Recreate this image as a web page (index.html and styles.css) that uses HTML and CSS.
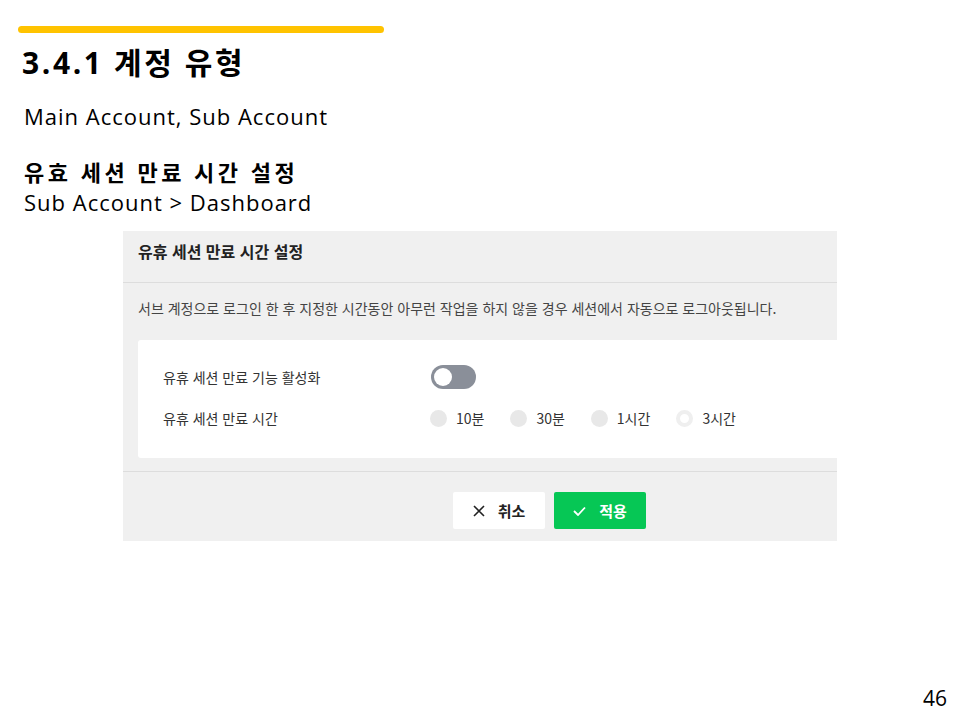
FILE: index.html
```html
<!DOCTYPE html>
<html lang="ko">
<head>
<meta charset="utf-8">
<link rel="stylesheet" href="styles.css">
</head>
<body>
<div class="slide">
  <div class="accent"></div>
  <h1 class="title">3.4.1 계정 유형</h1>
  <p class="text">Main Account, Sub Account</p>
  <h2 class="subtitle">유효 세션 만료 시간 설정</h2>
  <p class="text path">Sub Account &gt; Dashboard</p>

  <div class="shot">
    <div class="shot-head">유휴 세션 만료 시간 설정</div>
    <div class="shot-desc">서브 계정으로 로그인 한 후 지정한 시간동안 아무런 작업을 하지 않을 경우 세션에서 자동으로 로그아웃됩니다.</div>
    <div class="card">
      <div class="row">
        <div class="label">유휴 세션 만료 기능 활성화</div>
        <div class="toggle"><span class="knob"></span></div>
      </div>
      <div class="row">
        <div class="label">유휴 세션 만료 시간</div>
        <div class="radios">
          <span class="radio"><span class="dot"></span>10분</span>
          <span class="radio"><span class="dot"></span>30분</span>
          <span class="radio"><span class="dot"></span>1시간</span>
          <span class="radio"><span class="dot light"></span>3시간</span>
        </div>
      </div>
    </div>
    <div class="shot-foot">
      <button class="btn cancel"><svg width="12" height="12" viewBox="0 0 12 12"><path d="M1 1 L11 11 M11 1 L1 11" stroke="#222" stroke-width="1.6" fill="none"/></svg>취소</button>
      <button class="btn apply"><svg width="13" height="10" viewBox="0 0 13 10"><path d="M1 5 L5 9 L12 1.5" stroke="#fff" stroke-width="1.8" fill="none"/></svg>적용</button>
    </div>
  </div>
  <div class="page">46</div>
</div>
</body>
</html>
```
FILE: styles.css
```css
* { box-sizing: border-box; }
html, body { margin: 0; padding: 0; background: #fff; }
body { font-family: "Open Sans", "Noto Sans CJK KR", sans-serif; color: #000; }
.slide { width: 960px; height: 720px; position: relative; overflow: hidden; padding-top: 26px; }
.accent { margin-left: 18px; width: 366px; height: 7px; background: #FFC300; border-radius: 4px; }
.title { margin: 10px 0 0 22px; font-size: 30px; font-weight: 700; line-height: 40px; letter-spacing: 2.6px; }
.text { margin: 0 0 0 24px; font-size: 22px; line-height: 30px; font-weight: 400; letter-spacing: 1px; }
.title + .text { margin-top: 18px; }
.subtitle { margin: 26px 0 0 24px; font-size: 22px; font-weight: 700; line-height: 30px; letter-spacing: 3.5px; }
.path { margin-top: 0; }
.shot { margin: 14px 0 0 123px; width: 714px; background: #f0f0f0; font-family: "Noto Sans CJK KR", sans-serif; color: #333; }
.shot-head { height: 52px; padding: 8px 0 0 15px; font-size: 16px; font-weight: 700; color: #222; border-bottom: 1px solid #ddd; }
.shot-desc { padding: 15px 0 0 15px; height: 57px; font-size: 14px; color: #444; }
.card { margin-left: 15px; background: #fff; height: 118px; padding: 23px 0 0 25px; border-radius: 3px 0 0 3px; }
.row { display: flex; align-items: center; height: 28px; margin-bottom: 13px; }
.row:last-child { margin-bottom: 0; }
.label { width: 268px; font-size: 14px; color: #333; }
.toggle { width: 45px; height: 24px; border-radius: 12px; background: #8a8f99; position: relative; }
.knob { position: absolute; left: 3px; top: 3px; width: 18px; height: 18px; border-radius: 50%; background: #fff; }
.radios { display: flex; align-items: center; font-size: 14px; color: #333; }
.radio { display: flex; align-items: center; margin-right: 27px; }
.dot { width: 17px; height: 17px; border-radius: 50%; background: #e8e8e8; margin-right: 9px; margin-left: -1px; }
.dot.light { background: #fff; border: 4px solid #efefef; }
.shot-foot { margin-top: 13px; border-top: 1px solid #ddd; height: 70px; display: flex; gap: 9px; padding: 20px 0 0 330px; }
.btn { width: 92px; height: 37px; border: none; border-radius: 2px; display: flex; align-items: center; justify-content: center; gap: 13px; font-family: "Noto Sans CJK KR", sans-serif; font-size: 15px; font-weight: 700; padding: 0; }
.cancel { background: #fff; color: #222; }
.apply { background: #06c755; color: #fff; }
.page { position: absolute; right: 13px; top: 684px; font-size: 21px; font-family: "Open Sans", sans-serif; }
```
